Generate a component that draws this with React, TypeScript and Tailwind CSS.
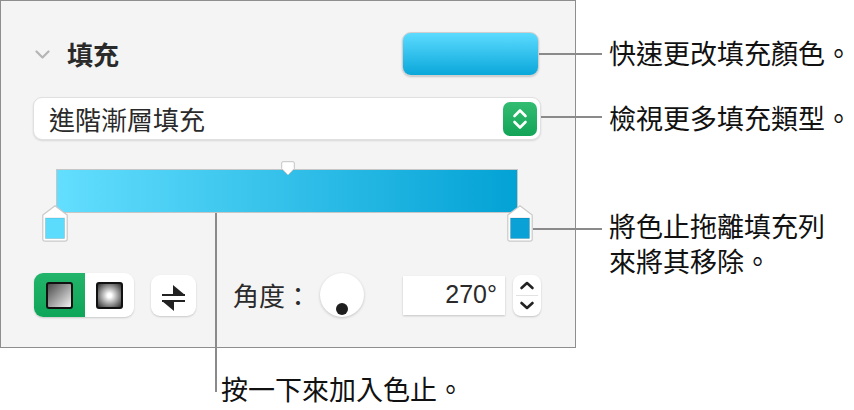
import React from "react";

const cjk = { fontFamily: '"Noto Sans CJK TC", "Noto Sans", sans-serif' };

function Stop({ color }: { color: string }) {
  return (
    <svg width="26" height="37" viewBox="0 0 26 37">
      <path
        d="M13 0.8 L25.2 10 L25.2 34 Q25.2 36.2 23 36.2 L3 36.2 Q0.8 36.2 0.8 34 L0.8 10 Z"
        fill="#ffffff"
        stroke="#c9c9c9"
        strokeWidth="1.2"
      />
      <rect x="3.5" y="13" width="19" height="20.5" fill={color} stroke="rgba(0,0,0,0.15)" strokeWidth="0.8" />
    </svg>
  );
}

export default function App() {
  return (
    <div className="relative h-[410px] w-[854px] overflow-hidden bg-white" style={cjk}>
      <div className="flex">
        {/* Panel */}
        <div className="h-[348px] w-[576px] shrink-0 border border-[#8e8e8e] bg-[#f4f4f4] pl-[32px] pr-[34px] pt-[31px]">
          {/* header */}
          <div className="flex h-[44px] items-center">
            <svg className="ml-[2px]" width="15" height="9" viewBox="0 0 15 9">
              <path d="M1.5 1.5 L7.5 7.5 L13.5 1.5" fill="none" stroke="#b5b5b5" strokeWidth="2.2" strokeLinecap="round" strokeLinejoin="round" />
            </svg>
            <span className="ml-[17px] text-[26px] font-bold leading-[32px] text-[#2a2a2a]">填充</span>
            <div className="ml-auto mr-[2px] h-[44px] w-[137px] rounded-[9px] border border-[#cfcfcf] bg-[linear-gradient(180deg,#5cdbff,#0aa7da)] shadow-[0_1px_2px_rgba(0,0,0,0.2)]" />
          </div>

          {/* dropdown */}
          <div className="mt-[21px] flex h-[43px] items-center rounded-[9px] border border-[#e0e0e0] bg-white pl-[15px] pr-[3px] shadow-[0_1px_2px_rgba(0,0,0,0.12)]">
            <span className="text-[26px] leading-[32px] text-[#2a2a2a]">進階漸層填充</span>
            <div className="ml-auto flex h-[34px] w-[34px] items-center justify-center rounded-[7px] bg-[linear-gradient(180deg,#33bc72,#12a457)]">
              <svg width="34" height="34" viewBox="0 0 34 34">
                <path d="M11.5 14 L17 8.5 L22.5 14" fill="none" stroke="#fff" strokeWidth="2.6" strokeLinecap="round" strokeLinejoin="round" />
                <path d="M11.5 20 L17 25.5 L22.5 20" fill="none" stroke="#fff" strokeWidth="2.6" strokeLinecap="round" strokeLinejoin="round" />
              </svg>
            </div>
          </div>

          {/* gradient editor */}
          <div className="relative mt-[21px] h-[81px] pt-[8px]">
            <div className="mx-[23px] h-[44px] border-[1.5px] border-[#c6c6c6] bg-[linear-gradient(90deg,#63defe,#03a2d5)]" />
            <div className="absolute left-[248px] top-0">
              <svg width="14" height="15" viewBox="0 0 14 15">
                <path d="M2 0.7 L12 0.7 Q13.3 0.7 13.3 2 L13.3 7.5 L7 14 L0.7 7.5 L0.7 2 Q0.7 0.7 2 0.7 Z" fill="#fff" stroke="#c4c4c4" strokeWidth="1" />
              </svg>
            </div>
            <div className="absolute left-[9px] top-[44px]">
              <Stop color="#5cdcfd" />
            </div>
            <div className="absolute left-[474px] top-[44px]">
              <Stop color="#0aa1d6" />
            </div>
          </div>

          {/* bottom row */}
          <div className="mt-[31px] flex h-[44px] items-center">
            <div className="ml-[1px] flex h-[44px] w-[100px] overflow-hidden rounded-[9px] bg-white shadow-[0_1px_2px_rgba(0,0,0,0.18)]">
              <div className="flex w-[51px] items-center justify-center bg-[linear-gradient(180deg,#22b46a,#0fa659)]">
                <div className="h-[27px] w-[27px] rounded-[3px] border-[2.5px] border-[#111] bg-[linear-gradient(135deg,#4a4a4a,#f3f3f3)]" />
              </div>
              <div className="flex flex-1 items-center justify-center">
                <div className="h-[27px] w-[27px] rounded-[3px] border-[2.5px] border-[#111] bg-[radial-gradient(circle,#ffffff_12%,#2c2c2c_100%)]" />
              </div>
            </div>
            <div className="ml-[17px] flex h-[41px] w-[45px] items-center justify-center rounded-[9px] bg-white shadow-[0_1px_2px_rgba(0,0,0,0.18)]">
              <svg width="45" height="41" viewBox="0 0 45 41">
                <path d="M11 20 L34 20" stroke="#222" strokeWidth="2" />
                <path d="M22 10 L22 20 L34 20 Z" fill="#222" />
                <path d="M11 26 L34 26" stroke="#222" strokeWidth="2" />
                <path d="M23 36 L23 26 L11 26 Z" fill="#222" />
              </svg>
            </div>
            <span className="ml-[37px] w-[78px] text-[26px] leading-[32px] text-[#2a2a2a]">角度：</span>
            <div className="relative ml-[9px] h-[44px] w-[44px] rounded-full bg-white shadow-[0_1px_3px_rgba(0,0,0,0.2)]">
              <div className="absolute left-[16px] top-[30px] h-[12px] w-[12px] rounded-full bg-[#1e1e1e]" />
            </div>
            <div
              className="ml-[39px] flex h-[39px] w-[102px] items-center justify-end bg-white pr-[8px] text-[25px] text-[#2a2a2a] shadow-[0_1px_2px_rgba(0,0,0,0.2)]"
              style={{ fontFamily: '"Liberation Sans", Arial, sans-serif' }}
            >
              270°
            </div>
            <div className="ml-[8px] h-[41px] w-[28px] rounded-[8px] bg-white shadow-[0_1px_2px_rgba(0,0,0,0.2)]">
              <svg width="28" height="41" viewBox="0 0 28 41">
                <path d="M8.5 13 L14 8 L19.5 13" fill="none" stroke="#222" strokeWidth="2.6" strokeLinecap="round" strokeLinejoin="round" />
                <path d="M3 20.5 L25 20.5" stroke="#e2e2e2" strokeWidth="1" />
                <path d="M8.5 28 L14 33 L19.5 28" fill="none" stroke="#222" strokeWidth="2.6" strokeLinecap="round" strokeLinejoin="round" />
              </svg>
            </div>
          </div>
        </div>

        {/* annotations */}
        <div className="ml-[33px] flex flex-col whitespace-nowrap text-[27px] leading-[35px] text-[#111]">
          <div className="mt-[35px] h-[35px]">快速更改填充顏色。</div>
          <div className="mt-[30px] h-[35px]">檢視更多填充類型。</div>
          <div className="mt-[73px] h-[35px]">將色止拖離填充列</div>
          <div className="h-[35px]">來將其移除。</div>
        </div>
      </div>

      <div className="mt-[23px] whitespace-nowrap pl-[221px] text-[27px] leading-[35px] text-[#111]">按一下來加入色止。</div>

      {/* leader lines */}
      <div className="absolute left-[539px] top-[53px] h-[2px] w-[63px] bg-[#8a8a8a]" />
      <div className="absolute left-[541px] top-[116px] h-[2px] w-[61px] bg-[#8a8a8a]" />
      <div className="absolute left-[533px] top-[228px] h-[2px] w-[69px] bg-[#8a8a8a]" />
      <div className="absolute left-[215px] top-[213px] h-[179px] w-[2px] bg-[#8a8a8a]" />
    </div>
  );
}
